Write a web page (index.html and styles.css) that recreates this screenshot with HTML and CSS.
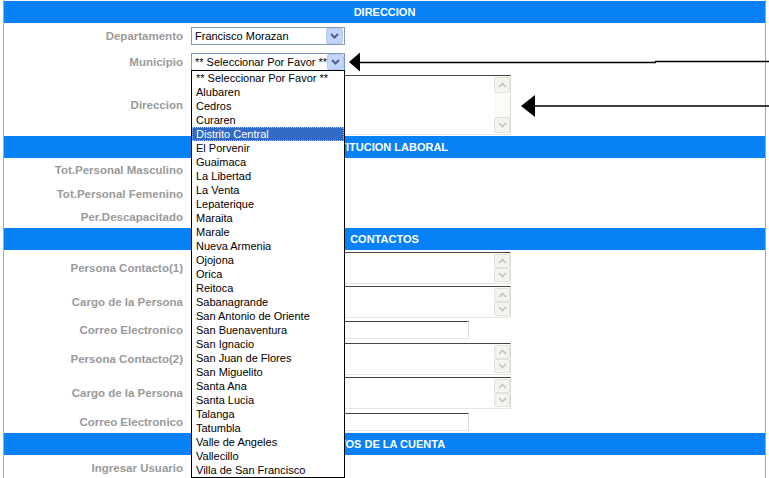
FILE: index.html
```html
<!DOCTYPE html>
<html>
  <head>
    <meta charset="utf-8" />
    <title>Registro de Institucion</title>
    <link rel="stylesheet" href="styles.css">
  </head>
  <body>
    <div class="page">
      <div class="section-title">DIRECCION</div>

      <div class="row r-dept">
        <div class="label">Departamento</div>
        <div class="select">
          <span class="select-text">Francisco Morazan</span>
          <span class="select-btn"><svg width="9" height="6" viewBox="0 0 9 6"><polyline points="1,1 4.5,4.5 8,1" fill="none" stroke="#4d6185" stroke-width="2"/></svg></span>
        </div>
      </div>

      <div class="row r-muni">
        <div class="label">Municipio</div>
        <div class="select">
          <span class="select-text">** Seleccionar Por Favor **</span>
          <span class="select-btn"><svg width="9" height="6" viewBox="0 0 9 6"><polyline points="1,1 4.5,4.5 8,1" fill="none" stroke="#4d6185" stroke-width="2"/></svg></span>
        </div>
      </div>

      <div class="row r-dir">
        <div class="label">Direccion</div>
        <div class="textbox tb-tall">
          <div class="scrollbar">
            <div class="sb-btn"><svg width="9" height="6" viewBox="0 0 9 6"><polyline points="1,5 4.5,1.5 8,5" fill="none" stroke="#c4c4bc" stroke-width="1.6"/></svg></div>
            <div class="sb-track"></div>
            <div class="sb-btn"><svg width="9" height="6" viewBox="0 0 9 6"><polyline points="1,1 4.5,4.5 8,1" fill="none" stroke="#c4c4bc" stroke-width="1.6"/></svg></div>
          </div>
        </div>
      </div>

      <div class="section-title">INSTITUCION LABORAL</div>

      <div class="row r-tot1">
        <div class="label">Tot.Personal Masculino</div>
        <div class="input input-small"></div>
      </div>
      <div class="row r-tot">
        <div class="label">Tot.Personal Femenino</div>
        <div class="input input-small"></div>
      </div>
      <div class="row r-tot">
        <div class="label">Per.Descapacitado</div>
        <div class="input input-small"></div>
      </div>

      <div class="section-title">CONTACTOS</div>

      <div class="row r-area1">
        <div class="label">Persona Contacto(1)</div>
        <div class="textbox">
          <div class="scrollbar">
            <div class="sb-btn"><svg width="9" height="6" viewBox="0 0 9 6"><polyline points="1,5 4.5,1.5 8,5" fill="none" stroke="#c4c4bc" stroke-width="1.6"/></svg></div>
            <div class="sb-btn"><svg width="9" height="6" viewBox="0 0 9 6"><polyline points="1,1 4.5,4.5 8,1" fill="none" stroke="#c4c4bc" stroke-width="1.6"/></svg></div>
          </div>
        </div>
      </div>
      <div class="row r-area">
        <div class="label">Cargo de la Persona</div>
        <div class="textbox">
          <div class="scrollbar">
            <div class="sb-btn"><svg width="9" height="6" viewBox="0 0 9 6"><polyline points="1,5 4.5,1.5 8,5" fill="none" stroke="#c4c4bc" stroke-width="1.6"/></svg></div>
            <div class="sb-btn"><svg width="9" height="6" viewBox="0 0 9 6"><polyline points="1,1 4.5,4.5 8,1" fill="none" stroke="#c4c4bc" stroke-width="1.6"/></svg></div>
          </div>
        </div>
      </div>
      <div class="row r-mail">
        <div class="label">Correo Electronico</div>
        <div class="input input-mail"></div>
      </div>
      <div class="row r-area1">
        <div class="label">Persona Contacto(2)</div>
        <div class="textbox">
          <div class="scrollbar">
            <div class="sb-btn"><svg width="9" height="6" viewBox="0 0 9 6"><polyline points="1,5 4.5,1.5 8,5" fill="none" stroke="#c4c4bc" stroke-width="1.6"/></svg></div>
            <div class="sb-btn"><svg width="9" height="6" viewBox="0 0 9 6"><polyline points="1,1 4.5,4.5 8,1" fill="none" stroke="#c4c4bc" stroke-width="1.6"/></svg></div>
          </div>
        </div>
      </div>
      <div class="row r-area">
        <div class="label">Cargo de la Persona</div>
        <div class="textbox">
          <div class="scrollbar">
            <div class="sb-btn"><svg width="9" height="6" viewBox="0 0 9 6"><polyline points="1,5 4.5,1.5 8,5" fill="none" stroke="#c4c4bc" stroke-width="1.6"/></svg></div>
            <div class="sb-btn"><svg width="9" height="6" viewBox="0 0 9 6"><polyline points="1,1 4.5,4.5 8,1" fill="none" stroke="#c4c4bc" stroke-width="1.6"/></svg></div>
          </div>
        </div>
      </div>
      <div class="row r-mail2">
        <div class="label">Correo Electronico</div>
        <div class="input input-mail"></div>
      </div>

      <div class="section-title">DATOS DE LA CUENTA</div>

      <div class="row r-user">
        <div class="label">Ingresar Usuario</div>
        <div class="input input-small"></div>
      </div>

      <!-- open list of the Municipio select -->
      <ul class="dropdown-list">
        <li>** Seleccionar Por Favor **</li>
        <li>Alubaren</li>
        <li>Cedros</li>
        <li>Curaren</li>
        <li class="selected">Distrito Central</li>
        <li>El Porvenir</li>
        <li>Guaimaca</li>
        <li>La Libertad</li>
        <li>La Venta</li>
        <li>Lepaterique</li>
        <li>Maraita</li>
        <li>Marale</li>
        <li>Nueva Armenia</li>
        <li>Ojojona</li>
        <li>Orica</li>
        <li>Reitoca</li>
        <li>Sabanagrande</li>
        <li>San Antonio de Oriente</li>
        <li>San Buenaventura</li>
        <li>San Ignacio</li>
        <li>San Juan de Flores</li>
        <li>San Miguelito</li>
        <li>Santa Ana</li>
        <li>Santa Lucia</li>
        <li>Talanga</li>
        <li>Tatumbla</li>
        <li>Valle de Angeles</li>
        <li>Vallecillo</li>
        <li>Villa de San Francisco</li>
      </ul>
    </div>

    <!-- annotation arrows drawn over the form -->
    <svg class="arrows" width="769" height="478" viewBox="0 0 769 478">
      <polygon points="349,62 360,52.5 360,71.5" fill="#000"/>
      <line x1="359" y1="62.5" x2="656" y2="62.5" stroke="#000" stroke-width="1.5"/>
      <line x1="655" y1="61.5" x2="769" y2="61.5" stroke="#000" stroke-width="1.5"/>
      <polygon points="521,106 535,95 535,117" fill="#000"/>
      <line x1="534" y1="106" x2="769" y2="106" stroke="#000" stroke-width="1.5"/>
    </svg>
  </body>
</html>
```

FILE: styles.css
```css
body {
  margin: 0;
  padding: 0;
  font-family: "Liberation Sans", Arial, sans-serif;
  background-color: #fff;
}

/* Page frame */
.page {
  position: relative;
  width: 763px;
  height: 478px;
  margin-left: 3px;
  padding-top: 1px;
  box-sizing: border-box;
  border-left: 1px solid #a8a8a8;
  border-right: 1px solid #a8a8a8;
  overflow: hidden;
}

/* Section bars */
.section-title {
  height: 22px;
  line-height: 22px;
  background-color: #0681f6;
  color: #fff;
  font-size: 11px;
  font-weight: bold;
  text-align: center;
}

/* Form rows */
.row {
  display: flex;
  align-items: center;
}

.r-dept { height: 26px; }
.r-muni { height: 25px; }
.r-dir { height: 62px; }
.r-tot1 { height: 24px; }
.r-tot { height: 23px; }
.r-area1 { height: 35px; }
.r-area { height: 34px; }
.r-mail { height: 22px; }
.r-mail2 { height: 23px; }
.r-user { height: 25px; }

.label {
  width: 179px;
  margin-right: 8px;
  text-align: right;
  color: #9a9a9a;
  font-size: 11.5px;
  font-weight: bold;
  white-space: nowrap;
}

/* Select boxes */
.select {
  display: flex;
  align-items: center;
  justify-content: space-between;
  width: 154px;
  height: 18px;
  box-sizing: border-box;
  border: 1px solid #7f9db9;
  background-color: #fff;
  font-size: 11px;
  color: #000;
  padding: 0 1px 0 3px;
  white-space: nowrap;
  overflow: hidden;
}

.select-btn {
  display: flex;
  align-items: center;
  justify-content: center;
  flex-shrink: 0;
  width: 15px;
  height: 14px;
  background-color: #c4d5fb;
  border: 1px solid #b5c8f2;
  border-radius: 2px;
}

/* Text areas */
.textbox {
  display: flex;
  justify-content: flex-end;
  width: 320px;
  height: 32px;
  box-sizing: border-box;
  border-top: 1px solid #444;
  border-left: 1px solid #444;
  border-right: 1px solid #dcdcdc;
  border-bottom: 1px solid #e6e6e6;
  background-color: #fff;
}

.tb-tall {
  height: 60px;
}

.scrollbar {
  display: flex;
  flex-direction: column;
  justify-content: space-between;
  width: 16px;
  padding: 1px 0;
  background-color: #fbfbf8;
}

.sb-btn {
  display: flex;
  align-items: center;
  justify-content: center;
  height: 14px;
  border: 1px solid #e2e2da;
  border-radius: 2px;
  background-color: #f4f4ef;
}

.sb-track {
  flex: 1;
}

/* Inputs */
.input {
  height: 18px;
  box-sizing: border-box;
  border-top: 1px solid #444;
  border-left: 1px solid #444;
  border-right: 1px solid #dcdcdc;
  border-bottom: 1px solid #e6e6e6;
}

.input-small {
  width: 60px;
}

.input-mail {
  width: 278px;
}

/* Open list of the Municipio select */
.dropdown-list {
  position: absolute;
  left: 187px;
  top: 70px;
  width: 154px;
  margin: 0;
  padding: 0;
  list-style: none;
  box-sizing: border-box;
  border: 1px solid #000;
  background-color: #fff;
  font-size: 11px;
  color: #000;
}

.dropdown-list li {
  height: 14px;
  line-height: 14px;
  padding-left: 4px;
  white-space: nowrap;
}

.dropdown-list li.selected {
  background-color: #316ac5;
  color: #fff;
  outline: 1px dotted #a8c0ec;
  outline-offset: -1px;
}

/* Annotation arrows */
.arrows {
  position: absolute;
  top: 0;
  left: 0;
  pointer-events: none;
}
```
